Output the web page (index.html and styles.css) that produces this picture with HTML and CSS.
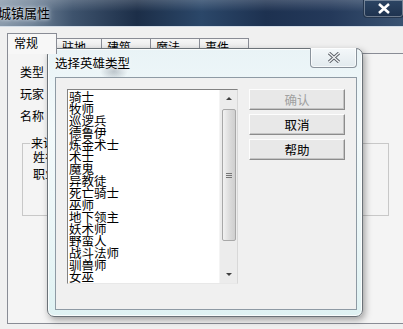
FILE: index.html
```html
<!DOCTYPE html>
<html lang="zh-CN">
<head>
    <meta charset="UTF-8">
    <title>城镇属性</title>
    <link rel="stylesheet" href="styles.css">
</head>
<body>
    <div class="window">
        <div class="titlebar">
            <span class="title">城镇属性</span>
            <div class="win-close">
                <svg width="14" height="11" viewBox="0 0 14 11"><path d="M2 1 L12 10 M12 1 L2 10" stroke="#fff" stroke-width="2.6"/></svg>
            </div>
        </div>
        <div class="win-body">
            <div class="tabs">
                <div class="tab active">常规</div>
                <div class="tab t1">驻地</div>
                <div class="tab t2">建筑</div>
                <div class="tab t2">魔法</div>
                <div class="tab t2">事件</div>
            </div>
            <div class="panel">
                <div class="row">类型</div>
                <div class="row">玩家</div>
                <div class="row">名称</div>
                <fieldset class="group">
                    <legend>来访英雄</legend>
                    <div class="grow">姓名</div>
                    <div class="grow">职业</div>
                </fieldset>
            </div>
        </div>

        <!-- overlapping modal dialog -->
        <div class="dialog">
            <div class="dlg-title">选择英雄类型</div>
            <div class="dlg-close">
                <svg width="14" height="11" viewBox="0 0 14 11"><path d="M2 1 L12 10 M12 1 L2 10" stroke="#5a5f66" stroke-width="3.2"/><path d="M2 1 L12 10 M12 1 L2 10" stroke="#f4f6f8" stroke-width="1.2"/></svg>
            </div>
            <div class="client">
                <div class="listbox">
                    <ul class="items">
                        <li>骑士</li>
                        <li>牧师</li>
                        <li>巡逻兵</li>
                        <li>德鲁伊</li>
                        <li>炼金术士</li>
                        <li>术士</li>
                        <li>魔鬼</li>
                        <li>异教徒</li>
                        <li>死亡骑士</li>
                        <li>巫师</li>
                        <li>地下领主</li>
                        <li>妖术师</li>
                        <li>野蛮人</li>
                        <li>战斗法师</li>
                        <li>驯兽师</li>
                        <li>女巫</li>
                        <li>位面行者</li>
                        <li>元素使</li>
                    </ul>
                    <div class="scrollbar">
                        <div class="arrow up"></div>
                        <div class="thumb"><span class="grip"></span></div>
                        <div class="arrow down"></div>
                    </div>
                </div>
                <div class="buttons">
                    <button class="btn" disabled>确认</button>
                    <button class="btn">取消</button>
                    <button class="btn">帮助</button>
                </div>
            </div>
        </div>
    </div>
</body>
</html>
```

FILE: styles.css
```css
body {
    margin: 0;
    padding: 0;
    background-color: #f0f0f0;
    font-family: "Noto Sans CJK SC", "Noto Sans", sans-serif;
    font-size: 12px;
    color: #000;
    overflow: hidden;
}
.window {
    position: relative;
    width: 403px;
    height: 329px;
    overflow: hidden;
}
.titlebar {
    height: 26px;
    display: flex;
    align-items: center;
    justify-content: space-between;
    background:
        linear-gradient(180deg, rgba(255,255,255,0.18) 0%, rgba(255,255,255,0) 45%),
        linear-gradient(90deg, #8a9aab 0%, #6f8297 8%, #3e536d 18%, #1c2e48 34%, #2b4769 50%, #1d3150 66%, #24395a 82%, #3a5372 100%);
    border-bottom: 1px solid #d3dde8;
}
.title {
    margin-left: -2px;
    font-size: 13px;
    line-height: 26px;
    color: #000;
    text-shadow: 0 0 6px #dfe6ee, 0 0 3px #e8eef4;
}
.win-close {
    width: 39px;
    height: 17px;
    margin-top: -9px;
    margin-right: -1px;
    border: 1px solid #24364e;
    border-top: none;
    border-radius: 0 0 4px 4px;
    box-shadow: inset 0 0 0 1px rgba(255,255,255,0.35);
    background: linear-gradient(180deg, #2c4564, #1e324e);
    display: flex;
    align-items: center;
    justify-content: center;
}
.win-body {
    padding-top: 6px;
}
.tabs {
    display: flex;
    align-items: flex-end;
    margin-left: 7px;
    height: 20px;
}
.tab {
    box-sizing: border-box;
    height: 15px;
    line-height: 15px;
    padding-left: 5px;
    border: 1px solid #898c95;
    border-bottom: none;
    border-left: none;
    background: linear-gradient(180deg, #f6f6f6, #e6e6e6);
}
.tab.active {
    width: 50px;
    height: 21px;
    line-height: 17px;
    padding-left: 6px;
    margin-bottom: -1px;
    border-left: 1px solid #898c95;
    background: #f7f7f7;
    position: relative;
    z-index: 1;
}
.tab.t1 { width: 45px; }
.tab.t2 { width: 49px; }
.panel {
    box-sizing: border-box;
    width: 420px;
    height: 271px;
    margin-left: 7px;
    padding: 11px 0 0 12px;
    border: 1px solid #898c95;
    background: #f4f4f4;
}
.row {
    height: 22px;
    line-height: 14px;
}
.group {
    box-sizing: border-box;
    width: 367px;
    height: 80px;
    margin: 5px 0 0 2px;
    padding: 0 0 0 10px;
    border: 1px solid #c8c8c8;
}
.group legend {
    padding: 0 1px;
    margin-left: -3px;
    line-height: 14px;
}
.grow {
    height: 17px;
    line-height: 14px;
}

/* modal dialog (Aero glass frame) */
.dialog {
    position: absolute;
    left: 47px;
    top: 48px;
    box-sizing: border-box;
    width: 316px;
    height: 269px;
    border: 1px solid #6b7278;
    border-radius: 7px;
    background:
        radial-gradient(ellipse 14px 10px at 66px 22px, rgba(70,80,95,0.3), rgba(70,80,95,0)),
        linear-gradient(180deg, #e9f3f6 0%, #f3fafb 30%, #eaf6f7 70%, #dff2f3 100%);
    box-shadow: 2px 3px 7px rgba(0,0,0,0.35), inset 0 0 0 1px rgba(255,255,255,0.8);
}
.dlg-title {
    position: absolute;
    left: 7px;
    top: 6px;
    font-size: 12.5px;
    line-height: 16px;
    text-shadow: 0 0 5px #fff;
}
.dlg-close {
    position: absolute;
    left: 262px;
    top: -1px;
    box-sizing: border-box;
    width: 47px;
    height: 20px;
    border: 1px solid #8a939c;
    border-top: none;
    border-radius: 0 0 4px 4px;
    background: linear-gradient(180deg, #f4f8fa, #e2eaee);
    box-shadow: inset 0 0 0 1px rgba(255,255,255,0.7);
    display: flex;
    align-items: center;
    justify-content: center;
}
.client {
    position: absolute;
    left: 7px;
    top: 28px;
    box-sizing: border-box;
    width: 302px;
    height: 233px;
    border: 1px solid #8e9aa4;
    background: #f0f0f0;
    display: flex;
    align-items: flex-start;
    padding: 11px 0 0 11px;
}
.listbox {
    box-sizing: border-box;
    width: 171px;
    height: 195px;
    border: 1px solid #9a9a9a;
    border-color: #828282 #d8d8d8 #e8e8e8 #828282;
    background: #fff;
    display: flex;
    overflow: hidden;
}
.items {
    flex: 1;
    margin: 0;
    padding: 1px 0 0 1px;
    list-style: none;
    font-size: 12.5px;
    line-height: 12px;
    overflow: hidden;
}
.items li {
    height: 12px;
    white-space: nowrap;
}
.scrollbar {
    width: 17px;
    background: #ececec;
    border-left: 1px solid #f4f4f4;
    display: flex;
    flex-direction: column;
    align-items: center;
}
.arrow {
    width: 0;
    height: 0;
    border-left: 3px solid transparent;
    border-right: 3px solid transparent;
}
.arrow.up {
    margin: 7px 0 9px;
    border-bottom: 3px solid #404040;
}
.arrow.down {
    margin-top: auto;
    margin-bottom: 7px;
    border-top: 3px solid #404040;
}
.thumb {
    box-sizing: border-box;
    width: 14px;
    height: 132px;
    border: 1px solid #a8a8a8;
    border-radius: 2px;
    background: linear-gradient(90deg, #f2f2f2, #dadada 60%, #cfcfcf);
    display: flex;
    align-items: center;
    justify-content: center;
}
.grip {
    width: 6px;
    height: 5px;
    border-top: 1px solid #777;
    border-bottom: 1px solid #777;
    box-sizing: border-box;
    background: linear-gradient(180deg, transparent 1px, #777 1px, #777 2px, transparent 2px);
}
.buttons {
    display: flex;
    flex-direction: column;
    gap: 4px;
    margin-left: 11px;
}
.btn {
    box-sizing: border-box;
    width: 96px;
    height: 21px;
    padding: 0;
    font-family: "Noto Sans CJK SC", "Noto Sans", sans-serif;
    font-size: 12.5px;
    line-height: 17px;
    color: #000;
    border: 1px solid;
    border-color: #fdfdfd #8c8c8c #8c8c8c #fdfdfd;
    box-shadow: inset -1px -1px 0 #c4c4c4;
    background: #e8e8e8;
}
.btn:disabled {
    color: #a0a0a0;
}
```
